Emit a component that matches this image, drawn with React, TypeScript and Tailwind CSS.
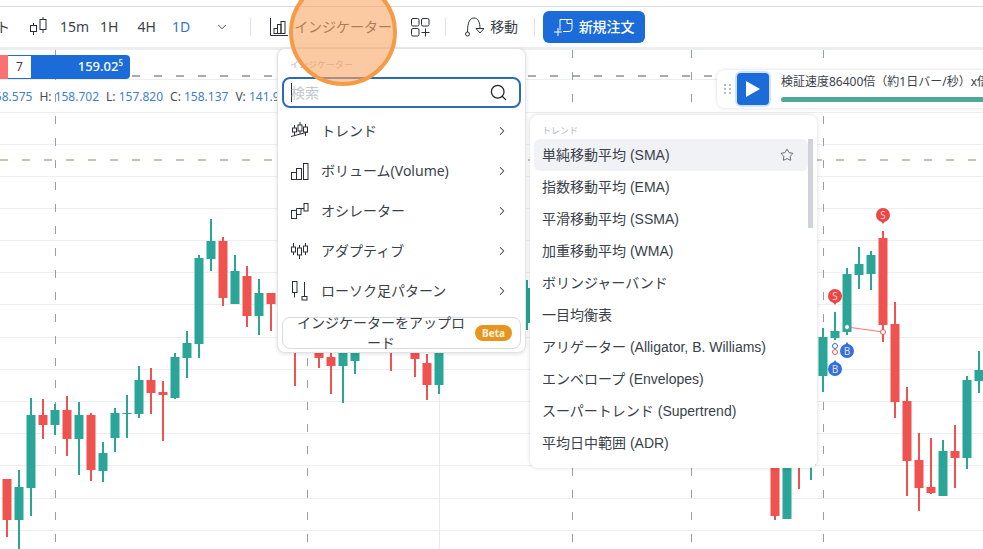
import { ChevronDown, ChevronRight, Search, Star } from 'lucide-react';

// [x, bodyTop, bodyBottom, wickTop, wickBottom, up]
const candles: [number, number, number, number, number, boolean][] = [
  [7, 479, 520, 479, 537, false],
  [19, 487, 520, 470, 549, true],
  [31, 415, 488, 398, 516, true],
  [43, 415, 425, 399, 439, false],
  [55, 410, 425, 404, 435, true],
  [67, 410, 439, 396, 456, false],
  [79, 415, 439, 402, 475, true],
  [91, 415, 470, 413, 481, false],
  [103, 453, 471, 442, 482, true],
  [115, 413, 438, 408, 452, true],
  [127, 413, 414, 395, 438, true],
  [139, 380, 414, 366, 418, true],
  [151, 380, 393, 368, 414, false],
  [163, 392, 395, 381, 441, false],
  [175, 357, 398, 353, 399, true],
  [187, 343, 358, 331, 378, true],
  [199, 258, 344, 255, 358, true],
  [211, 241, 259, 219, 271, true],
  [223, 241, 298, 237, 306, false],
  [235, 271, 304, 255, 304, true],
  [247, 276, 316, 266, 327, false],
  [259, 293, 316, 279, 335, true],
  [271, 293, 304, 293, 331, false],
  [295, 340, 350, 340, 386, false],
  [319, 345, 358, 340, 368, false],
  [331, 357, 366, 345, 394, false],
  [343, 345, 366, 340, 403, true],
  [355, 345, 361, 340, 374, true],
  [391, 340, 350, 340, 371, false],
  [415, 345, 359, 340, 377, false],
  [427, 363, 385, 354, 400, false],
  [439, 340, 385, 340, 394, true],
  [527, 288, 323, 280, 330, true],
  [775, 440, 516, 440, 520, false],
  [787, 440, 519, 440, 519, true],
  [799, 440, 460, 440, 489, false],
  [811, 440, 465, 440, 480, true],
  [823, 337, 376, 328, 392, true],
  [835, 331, 338, 312, 340, true],
  [847, 274, 332, 268, 335, true],
  [859, 264, 275, 247, 289, true],
  [871, 255, 274, 251, 290, true],
  [883, 238, 325, 231, 342, false],
  [895, 324, 402, 302, 418, false],
  [907, 401, 461, 387, 496, false],
  [919, 460, 488, 433, 511, false],
  [931, 487, 493, 438, 494, false],
  [943, 451, 496, 440, 496, true],
  [955, 451, 458, 425, 488, false],
  [967, 380, 458, 376, 469, true],
  [979, 370, 381, 351, 393, true],
];

const gridYs = [79, 112, 144, 176, 208, 240, 272, 304, 337, 369, 401, 433, 465, 498, 530];
const dashedXs = [55, 307, 572, 691, 823];

const subItems = [
  '単純移動平均 (SMA)',
  '指数移動平均 (EMA)',
  '平滑移動平均 (SSMA)',
  '加重移動平均 (WMA)',
  'ボリンジャーバンド',
  '一目均衡表',
  'アリゲーター (Alligator, B. Williams)',
  'エンベロープ (Envelopes)',
  'スーパートレンド (Supertrend)',
  '平均日中範囲 (ADR)',
];

const Marker = ({ x, y, label, fill }: { x: number; y: number; label: string; fill: string }) => (
  <g>
    <circle cx={x} cy={y} r={7} fill={fill} />
    <path d={`M${x - 2} ${y + (label === 'S' ? 6 : -6)} L${x} ${y + (label === 'S' ? 9 : -9)} L${x + 2} ${y + (label === 'S' ? 6 : -6)}Z`} fill={fill} />
    <text x={x} y={y + 3.5} textAnchor="middle" fontSize="10" fill="#f3d9d9" fontFamily="Noto Sans">
      {label}
    </text>
  </g>
);

const Chart = () => (
  <svg viewBox="0 50 983 499" className="absolute inset-0 h-full w-full">
    {gridYs.map((y) => (
      <line key={y} x1={0} x2={983} y1={y + 0.5} y2={y + 0.5} stroke="#eceef1" />
    ))}
    <line x1={439.5} x2={439.5} y1={50} y2={549} stroke="#e8eaed" />
    {dashedXs.map((x) => (
      <line key={x} x1={x + 0.5} x2={x + 0.5} y1={50} y2={549} stroke="#9a9ea6" strokeDasharray="8 14" />
    ))}
    <line x1={0} x2={983} y1={76} y2={76} stroke="#8e9094" strokeWidth={1.5} strokeDasharray="8 14" />
    <line x1={0} x2={983} y1={160} y2={160} stroke="#b5ae98" strokeWidth={1.5} strokeDasharray="8 14" />
    {candles.map(([x, top, bottom, wt, wb, up]) => {
      const c = up ? '#2aa598' : '#ef5350';
      return (
        <g key={x} fill={c}>
          <rect x={x - 1} y={wt} width={2} height={wb - wt} />
          <rect x={x - 4.5} y={top} width={9} height={Math.max(bottom - top, 1)} />
        </g>
      );
    })}
    <line x1={847} y1={327} x2={883} y2={332} stroke="#ef5350" strokeWidth={0.8} />
    <circle cx={835} cy={346} r={2.5} fill="#fff" stroke="#2f6fd6" />
    <circle cx={835} cy={352} r={2.5} fill="#fff" stroke="#ef5350" />
    <circle cx={847} cy={327} r={2.5} fill="#fff" stroke="#2aa598" />
    <circle cx={883} cy={332} r={2.5} fill="#fff" stroke="#ef5350" />
    <Marker x={835} y={296} label="S" fill="#ef4444" />
    <Marker x={883} y={215} label="S" fill="#ef4444" />
    <Marker x={847} y={351} label="B" fill="#2f72de" />
    <Marker x={835} y={369} label="B" fill="#2f72de" />
  </svg>
);

const Sep = () => <div className="h-[18px] w-px bg-[#dfe1e5]" />;

const TrendIcon = () => (
  <svg width="20" height="20" viewBox="0 0 20 20" fill="none" stroke="#2a2e39" strokeWidth="1">
    <path d="M4.500 4v3M4.500 11v3M10 1v3M10 10v3M15.500 3v3M15.500 11v4" />
    <rect x="2.500" y="7" width="4" height="4" />
    <rect x="8" y="4" width="4" height="6" />
    <rect x="13.500" y="6" width="4" height="5" />
    <path d="M1 15.500 18 11" />
  </svg>
);

const VolumeIcon = () => (
  <svg width="20" height="20" viewBox="0 0 20 20" fill="none" stroke="#2a2e39" strokeWidth="1">
    <rect x="1.500" y="11.500" width="5" height="7" />
    <rect x="6.500" y="7.500" width="5" height="11" />
    <rect x="13.500" y="2.500" width="4.500" height="16" />
  </svg>
);

const OscillatorIcon = () => (
  <svg width="20" height="20" viewBox="0 0 20 20" fill="none" stroke="#2a2e39" strokeWidth="1">
    <rect x="1.500" y="9.500" width="5" height="8" />
    <path d="M6.500 13.500h4.500v-6h3" />
    <path d="M6.500 9.500V7.500h4.500" />
    <rect x="14" y="2.500" width="4" height="7.500" />
  </svg>
);

const AdaptiveIcon = () => (
  <svg width="20" height="20" viewBox="0 0 20 20" fill="none" stroke="#2a2e39" strokeWidth="1">
    <path d="M3.500 2v4M3.500 11v3M9.500 4v3M9.500 14v4M15.500 2v3M15.500 11v3" />
    <rect x="1.500" y="6" width="4" height="5" />
    <rect x="7.500" y="7" width="4" height="7" />
    <rect x="13.500" y="5" width="4" height="6" />
  </svg>
);

const PatternIcon = () => (
  <svg width="20" height="22" viewBox="0 0 20 22" fill="none" stroke="#2a2e39" strokeWidth="1">
    <rect x="2.500" y="1.500" width="4.500" height="11" />
    <path d="M4.500 12.500v5M14.500 2v14" />
    <rect x="12" y="16.500" width="5" height="3.500" />
  </svg>
);

const menuItems = [
  { label: 'トレンド', icon: <TrendIcon /> },
  { label: 'ボリューム(Volume)', icon: <VolumeIcon /> },
  { label: 'オシレーター', icon: <OscillatorIcon /> },
  { label: 'アダプティブ', icon: <AdaptiveIcon /> },
  { label: 'ローソク足パターン', icon: <PatternIcon /> },
];

const IndicatorMenu = () => (
  <div className="absolute left-[277px] top-[-2px] z-10 flex h-[305px] w-[249px] flex-col rounded-lg border border-[#e1e3e7] bg-white px-[4px] shadow-[0_1px_4px_rgba(0,0,0,0.12)]">
    <div className="mt-[9px] pl-[8px] text-[9px] leading-[14px] text-[#b4b8bf]">インジケーター</div>
    <div className="mt-[5px] flex h-[31px] items-center rounded-lg border-2 border-[#2a6bb8] pl-[7px] pr-[11px]">
      <div className="h-[19px] w-px bg-[#2a2e39]" />
      <span className="ml-[-1px] flex-1 text-sm text-[#c3c7ce]">検索</span>
      <Search size={19} strokeWidth={1.6} className="text-[#1f232b]" />
    </div>
    <div className="mt-[3px] flex flex-col">
      {menuItems.map((item) => (
        <div key={item.label} className="flex h-[40px] items-center pl-[8px] pr-[12px] text-sm text-[#3a3f4a]">
          <span className="flex w-[31px] shrink-0 items-center">{item.icon}</span>
          <span className="flex-1">{item.label}</span>
          <ChevronRight size={14} strokeWidth={1.8} className="text-[#3a3f4a]" />
        </div>
      ))}
    </div>
    <div className="mt-[6px] flex h-[32px] items-center rounded-lg border border-[#d8dade] pl-[12px] pr-[8px]">
      <span className="w-[172px] text-center text-sm leading-[20px] text-[#3a3f4a]">インジケーターをアップロード</span>
      <span className="ml-auto flex h-[16px] w-[37px] items-center justify-center rounded-full bg-[#e6961e] text-[10px] font-bold text-[#fdf3e0]">
        Beta
      </span>
    </div>
  </div>
);

const SubMenu = () => (
  <div className="absolute left-[530px] top-[65px] z-10 flex h-[353px] w-[287px] flex-col rounded-lg bg-white px-[4px] font-['Liberation_Sans','Noto_Sans_CJK_JP',sans-serif] shadow-[0_0_4px_rgba(0,0,0,0.16)]">
    <div className="mt-[9px] h-[15px] pl-[8px] text-[9px] leading-[14px] text-[#b4b8bf]">トレンド</div>
    <div className="relative flex flex-col">
      {subItems.map((label, i) => (
        <div
          key={label}
          className={`flex h-[32px] w-[274px] items-center justify-between rounded-md pl-[8px] pr-[14px] text-sm text-[#3a3f4a] ${i === 0 ? 'bg-[#f1f2f6]' : ''}`}
        >
          <span>{label}</span>
          {i === 0 && <Star size={14} strokeWidth={1.3} className="text-[#3a3f4a]" />}
        </div>
      ))}
      <div className="absolute left-[274px] top-0 h-[89px] w-[5px] bg-[#d0d3da]" />
    </div>
  </div>
);

const ReplayBar = () => (
  <div className="absolute left-[717px] top-[20px] z-10 flex h-[38px] w-[300px] items-center rounded-l-lg bg-white pl-[7px] shadow-[0_0_4px_rgba(0,0,0,0.14)]">
    <div className="grid w-[7px] grid-cols-2 gap-[2px]">
      {[0, 1, 2, 3, 4, 5].map((n) => (
        <span key={n} className="h-[2px] w-[2px] bg-[#b9bcc3]" />
      ))}
    </div>
    <button className="ml-[6px] flex h-[32px] w-[32px] items-center justify-center rounded bg-[#1b6bd8] shadow-[0_0_0_2px_#cfe3fb]">
      <svg width="16" height="18" viewBox="0 0 16 18">
        <path d="M1 1 15 9 1 17Z" fill="#fff" />
      </svg>
    </button>
    <div className="mb-[3px] ml-[12px] flex flex-1 flex-col">
      <div className="whitespace-nowrap text-[12px] leading-[18px] text-[#3a3f4a]">検証速度86400倍（約1日バー/秒）x倍速</div>
      <div className="mt-[6px] h-[5px] rounded-full bg-[#4fa897]" />
    </div>
  </div>
);

const Toolbar = () => (
  <div className="flex h-[40px] shrink-0 items-center text-sm text-[#3b3f48]">
    <span className="ml-[-4px] w-[14px]">ト</span>
    <svg className="ml-[20px]" width="17" height="20" viewBox="0 0 17 20" fill="none" stroke="#2a2e39" strokeWidth="1">
      <rect x="0.500" y="8.500" width="6" height="6" />
      <path d="M3.500 6v2.500M3.500 14.500V18" />
      <rect x="10" y="2.500" width="6" height="10" />
      <path d="M13 0v2.500M13 12.500V16" />
    </svg>
    <span className="ml-[13px]">15m</span>
    <span className="ml-[11px]">1H</span>
    <span className="ml-[19px]">4H</span>
    <span className="ml-[16px] text-[#3a74c8]">1D</span>
    <ChevronDown size={14} strokeWidth={1.6} className="ml-[25px]" />
    <div className="ml-[21px]">
      <Sep />
    </div>
    <svg className="ml-[19px]" width="18" height="18" viewBox="0 0 18 18" fill="none" stroke="#2a2e39" strokeWidth="1">
      <path d="M0.500 0v17.500H18" />
      <rect x="4" y="10.500" width="3.500" height="5" />
      <rect x="7.500" y="6.500" width="3.500" height="9" />
      <rect x="11" y="3.500" width="4" height="12" />
    </svg>
    <span className="ml-[6px]">インジケーター</span>
    <svg className="ml-[19px]" width="19" height="19" viewBox="0 0 19 19" fill="none" stroke="#2a2e39" strokeWidth="1">
      <rect x="0.500" y="0.500" width="7.500" height="7.500" rx="1.500" />
      <rect x="10.500" y="0.500" width="7.500" height="7.500" rx="1.500" />
      <rect x="0.500" y="10.500" width="7.500" height="7.500" rx="1.500" />
      <path d="M14.500 10.500v8M10.500 14.500h8" />
    </svg>
    <div className="ml-[15px]">
      <Sep />
    </div>
    <svg className="ml-[19px]" width="19" height="20" viewBox="0 0 19 20" fill="none" stroke="#2a2e39" strokeWidth="1">
      <circle cx="2.500" cy="17" r="2" />
      <path d="M2.500 15C2.500 5 5 1 9 1s6 4 6 11" />
      <path d="M11 11.500h8L15 16Z" />
    </svg>
    <span className="ml-[6px]">移動</span>
    <div className="ml-[16px]">
      <Sep />
    </div>
    <button className="ml-[8px] flex h-[32px] w-[102px] items-center justify-center gap-[6px] rounded-md bg-[#1b6bd8] font-medium text-white">
      <svg width="19" height="19" viewBox="0 0 19 19" fill="none" stroke="#fff" strokeWidth="1">
        <path d="M6 12.500V1.500h12v9q0 3-3 3H9" />
        <path d="M13 1.500v4h5" />
        <path d="M4 10v8M0 14h8" />
      </svg>
      新規注文
    </button>
  </div>
);

const App = () => (
  <div className="relative flex h-[549px] w-[983px] flex-col overflow-hidden bg-white pt-[6px] font-['Noto_Sans','Noto_Sans_CJK_JP',sans-serif]">
    <div className="h-px shrink-0 bg-[#d9dbde]" />
    <Toolbar />
    <div className="h-[3px] shrink-0 bg-[#eceef0]" />
    <div className="relative flex-1">
      <Chart />
      <div className="absolute left-0 top-[5px] flex h-[24px] w-[130px] overflow-hidden rounded-r-[4px] bg-[#1b6bd8] text-xs">
        <div className="w-[8px] bg-[#f87272]" />
        <div className="my-px flex w-[23px] items-center justify-center bg-white text-[#3b3f48]">7</div>
        <div className="flex flex-1 items-center justify-end pr-[7px] text-[13px] font-medium text-white">
          159.02<sup className="text-[8px]">5</sup>
        </div>
      </div>
      <div className="absolute left-[-12px] top-[38px] flex gap-[7px] whitespace-nowrap text-xs leading-[18px] text-[#474b55]">
        <span className="text-[#3f7fc4]">158.575</span>
        <span>
          H: <span className="text-[#3f7fc4]">158.702</span>
        </span>
        <span>
          L: <span className="text-[#3f7fc4]">157.820</span>
        </span>
        <span>
          C: <span className="text-[#3f7fc4]">158.137</span>
        </span>
        <span>
          V: <span className="text-[#3f7fc4]">141.9</span>
        </span>
      </div>
      <IndicatorMenu />
      <SubMenu />
      <ReplayBar />
    </div>
    {/* tutorial highlight over the Indicators button */}
    <div className="absolute left-[289px] top-[-22px] z-20 h-[108px] w-[108px] rounded-full border-4 border-[#f59a45] bg-[#f8a765]/60" />
  </div>
);

export default App;
